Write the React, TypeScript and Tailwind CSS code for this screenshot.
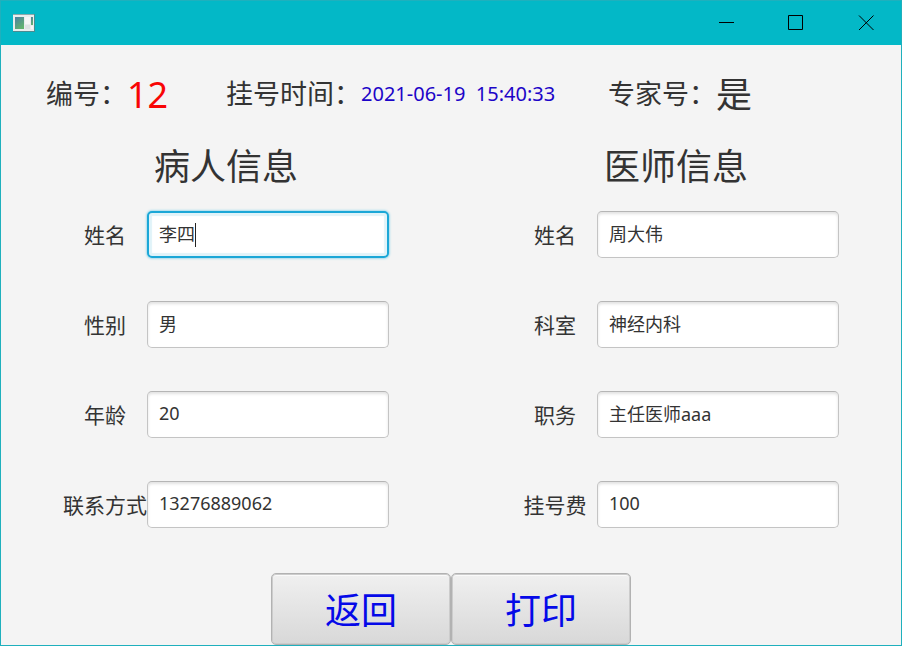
import { useState } from "react";

type FieldData = { id: string; label: string; value: string; active?: boolean };

const patientFields: FieldData[] = [
  { id: "patient-name", label: "姓名", value: "李四", active: true },
  { id: "patient-gender", label: "性别", value: "男" },
  { id: "patient-age", label: "年龄", value: "20" },
  { id: "patient-phone", label: "联系方式", value: "13276889062" },
];

const doctorFields: FieldData[] = [
  { id: "doctor-name", label: "姓名", value: "周大伟" },
  { id: "doctor-department", label: "科室", value: "神经内科" },
  { id: "doctor-title", label: "职务", value: "主任医师aaa" },
  { id: "doctor-fee", label: "挂号费", value: "100" },
];

function AppIcon() {
  return (
    <svg width="24" height="20" viewBox="0 0 24 20" shapeRendering="crispEdges" aria-hidden="true">
      <defs>
        <linearGradient id="pane" x1="0" y1="0" x2="0.6" y2="1">
          <stop offset="0" stopColor="#4d7fa3" />
          <stop offset="1" stopColor="#62b36f" />
        </linearGradient>
      </defs>
      <rect x="1" y="1" width="22" height="18" fill="#4b8b91" />
      <rect x="1" y="1" width="21" height="17" fill="#e9eded" />
      <rect x="1" y="1" width="21" height="1" fill="#8fa9ac" />
      <rect x="3" y="4" width="9" height="12" fill="url(#pane)" />
      <rect x="13" y="4" width="5" height="7" fill="#f6f6f6" />
      <rect x="13" y="12" width="5" height="4" fill="#dfe3e3" />
      <rect x="19" y="4" width="2" height="8" fill="url(#pane)" />
      <rect x="19" y="13" width="2" height="3" fill="#f6f6f6" />
    </svg>
  );
}

function WindowButton({ label, path }: { label: string; path: string }) {
  return (
    <button type="button" aria-label={label} className="flex h-full w-[70px] items-center justify-center">
      <svg width="16" height="16" viewBox="0 0 16 16" fill="none" stroke="#000000" aria-hidden="true">
        <path d={path} />
      </svg>
    </button>
  );
}

function Field({ id, label, value, active }: FieldData) {
  const [text, setText] = useState(value);
  return (
    <div className="flex h-[47px] items-center">
      <label htmlFor={id} className="w-[84px] text-center text-[21px] leading-[30px] whitespace-nowrap">
        {label}
      </label>
      <div className="relative flex w-[242px]">
        <input
          id={id}
          type="text"
          value={text}
          onChange={(e) => setText(e.target.value)}
          className={
            active
              ? "h-[47px] w-full rounded-[5px] border-2 border-[#1ba7d7] bg-white px-[10px] pb-[3px] text-lg caret-transparent shadow-[0_0_2px_1px_#a8dcec,inset_0_0_1px_3px_#e0f3f9] outline-none"
              : "h-[47px] w-full rounded-[5px] border border-[#c4c4c4] border-t-[#b5b5b5] bg-white px-[11px] pb-[3px] text-lg shadow-[inset_0_2px_3px_#e2e2e2] outline-none"
          }
        />
        {active && text === value && (
          <span className="pointer-events-none absolute top-3 left-12 h-6 w-px bg-[#222222]" />
        )}
      </div>
    </div>
  );
}

function Section({ title, fields }: { title: string; fields: FieldData[] }) {
  return (
    <section className="flex flex-col items-center">
      <h2 className="text-4xl leading-[45px]">{title}</h2>
      <div className="mt-[22px] flex flex-col gap-[43px]">
        {fields.map((f) => (
          <Field key={f.id} {...f} />
        ))}
      </div>
    </section>
  );
}

function ActionButton({ children }: { children: string }) {
  return (
    <button
      type="button"
      className="h-[72px] w-[180px] rounded-[5px] border border-[#b2b2b2] bg-linear-to-b from-[#f0f0f0] to-[#d8d8d8] pt-1 text-4xl text-[#0509e8] shadow-[inset_0_0_0_1px_#cccccc,inset_0_1px_0_1px_#fafafa]"
    >
      {children}
    </button>
  );
}

export default function App() {
  return (
    <div
      lang="zh-CN"
      className="flex min-h-screen flex-col border-x border-b border-[#1fb0bd] bg-[#f4f4f4] font-['Noto_Sans','Noto_Sans_CJK_SC',sans-serif] text-[#333333]"
    >
      <header className="flex h-[45px] items-center justify-between border-t border-[#1fb0bd] bg-[#03b8c7] pl-[11px]">
        <AppIcon />
        <div className="flex h-full">
          <WindowButton label="最小化" path="M1 7.5H16" />
          <WindowButton label="最大化" path="M.5 .5H14.5V14.5H.5Z" />
          <WindowButton label="关闭" path="M1 .5L15.5 15M15.5 .5L1 15" />
        </div>
      </header>

      <main>
        <div className="grid h-[99px] grid-cols-[180fr_382fr_293fr] items-center pl-[45px] text-[27px] whitespace-nowrap">
          <div className="flex items-center">
            编号：<span className="text-4xl text-[#f80505]">12</span>
          </div>
          <div className="flex items-center">
            挂号时间：
            <time className="pb-[2px] text-xl whitespace-pre text-[#1c04c8]">{"2021-06-19  15:40:33"}</time>
          </div>
          <div className="flex items-center">
            专家号：<span className="text-4xl">是</span>
          </div>
        </div>

        <form onSubmit={(e) => e.preventDefault()}>
          <div className="grid grid-cols-2">
            <Section title="病人信息" fields={patientFields} />
            <Section title="医师信息" fields={doctorFields} />
          </div>
          <div className="mt-[45px] flex justify-center">
            <ActionButton>返回</ActionButton>
            <ActionButton>打印</ActionButton>
          </div>
        </form>
      </main>
    </div>
  );
}
